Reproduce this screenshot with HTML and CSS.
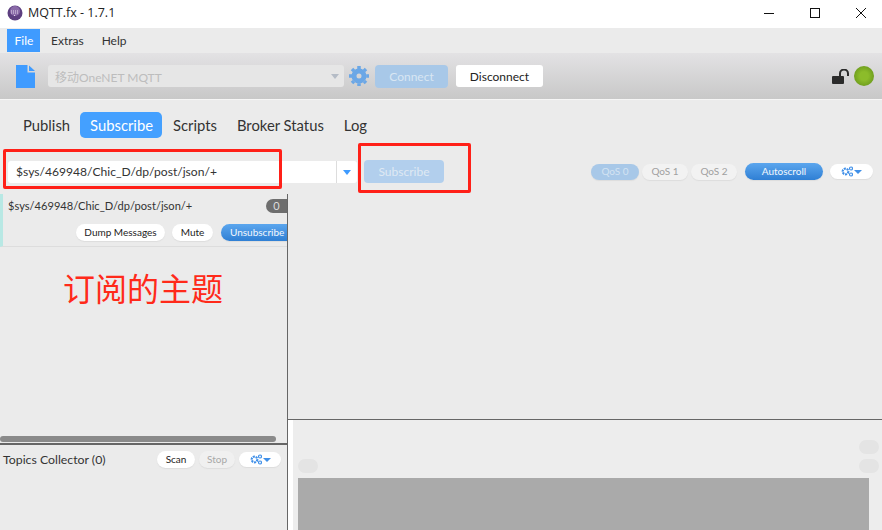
FILE: index.html
```html
<!DOCTYPE html>
<html lang="zh-CN">
<head>
    <meta charset="UTF-8">
    <title>MQTT.fx - 1.7.1</title>
    <link rel="stylesheet" href="styles.css">
</head>
<body>
<div class="window">
    <div class="titlebar">
        <svg class="app-icon" width="16" height="16" viewBox="0 0 16 16"><circle cx="8" cy="8" r="7.500" fill="#5d3f80"/><circle cx="8" cy="6" r="5" fill="#8a6aa8"/><path d="M4 6h8M4 8h8M7 10.500h2" stroke="#e4dcec" stroke-width="1" stroke-dasharray="1 1"/></svg>
        <span class="app-title">MQTT.fx - 1.7.1</span>
        <div class="win-btns">
            <svg width="12" height="12" viewBox="0 0 12 12"><path d="M1 6.500h10" stroke="#111" stroke-width="1"/></svg>
            <svg width="12" height="12" viewBox="0 0 12 12"><rect x="1.500" y="1.500" width="9" height="9" fill="none" stroke="#111"/></svg>
            <svg width="12" height="12" viewBox="0 0 12 12"><path d="M1 1l10 10M11 1L1 11" stroke="#111" stroke-width="1"/></svg>
        </div>
    </div>

    <div class="menubar">
        <div class="menu active">File</div>
        <div class="menu">Extras</div>
        <div class="menu">Help</div>
    </div>

    <div class="toolbar">
        <svg class="file-icon" width="19" height="23" viewBox="0 0 19 23"><path d="M0 0h11.500v7.500H19V23H0z" fill="#3f9bff"/><path d="M13 0.500l6 5.500h-6z" fill="#3f9bff"/></svg>
        <div class="profile">
            <span>移动OneNET MQTT</span>
            <i class="caret grey"></i>
        </div>
        <svg class="gear" width="20" height="20" viewBox="0 0 20 20"><circle cx="10" cy="10" r="5" fill="none" stroke="#6ba7e6" stroke-width="5"/><path d="M10 0v20M0 10h20M3 3l14 14M17 3L3 17" stroke="#6ba7e6" stroke-width="3.500" stroke-dasharray="3 14.200 3"/></svg>
        <button class="btn-connect">Connect</button>
        <button class="btn-disconnect">Disconnect</button>
        <svg class="lock" width="18" height="15" viewBox="0 0 18 15"><rect x="0" y="7" width="12" height="8" rx="1" fill="#2b2b2b"/><path d="M8 7V4.500a4 4 0 0 1 8 0V7" fill="none" stroke="#2b2b2b" stroke-width="2"/></svg>
        <div class="led"></div>
    </div>

    <div class="tabs">
        <div class="tab">Publish</div>
        <div class="tab active">Subscribe</div>
        <div class="tab">Scripts</div>
        <div class="tab">Broker Status</div>
        <div class="tab">Log</div>
    </div>

    <div class="subscribe-row">
        <div class="topic-input">
            <span class="topic-value">$sys/469948/Chic_D/dp/post/json/+</span>
            <span class="topic-arrow"><i class="caret"></i></span>
        </div>
        <button class="btn-subscribe">Subscribe</button>
        <div class="qos-group">
            <button class="pill qos on">QoS 0</button>
            <button class="pill qos">QoS 1</button>
            <button class="pill qos">QoS 2</button>
        </div>
        <button class="pill autoscroll">Autoscroll</button>
        <button class="pill cog-btn">
            <svg width="12" height="11" viewBox="0 0 12 11"><circle cx="4.500" cy="5.500" r="2.800" fill="none" stroke="#3f8fe8" stroke-width="2.200" stroke-dasharray="2 .8"/><circle cx="10" cy="2.500" r="1.500" fill="none" stroke="#3f8fe8" stroke-width="1.200"/><circle cx="10" cy="8.500" r="1.500" fill="none" stroke="#3f8fe8" stroke-width="1.200"/></svg>
            <i class="caret small"></i>
        </button>
    </div>

    <div class="split">
        <div class="left">
            <div class="topic-list">
                <div class="topic-item">
                    <div class="topic-head">
                        <span>$sys/469948/Chic_D/dp/post/json/+</span>
                        <span class="count">0</span>
                    </div>
                    <div class="topic-actions">
                        <button class="pill">Dump Messages</button>
                        <button class="pill">Mute</button>
                        <button class="pill unsub">Unsubscribe</button>
                    </div>
                </div>
                <div class="scrollbar"></div>
            </div>
            <div class="collector">
                <span class="collector-title">Topics Collector (0)</span>
                <button class="pill scan">Scan</button>
                <button class="pill stop">Stop</button>
                <button class="pill cog-btn small">
                    <svg width="12" height="11" viewBox="0 0 12 11"><circle cx="4.500" cy="5.500" r="2.800" fill="none" stroke="#3f8fe8" stroke-width="2.200" stroke-dasharray="2 .8"/><circle cx="10" cy="2.500" r="1.500" fill="none" stroke="#3f8fe8" stroke-width="1.200"/><circle cx="10" cy="8.500" r="1.500" fill="none" stroke="#3f8fe8" stroke-width="1.200"/></svg>
                    <i class="caret small"></i>
                </button>
            </div>
        </div>
        <div class="right">
            <div class="messages"></div>
            <div class="detail">
                <div class="detail-pills">
                    <div class="ghost"></div>
                    <div class="ghost-stack">
                        <div class="ghost"></div>
                        <div class="ghost"></div>
                    </div>
                </div>
                <div class="payload"></div>
            </div>
        </div>
    </div>

    <!-- red marks drawn over the screenshot -->
    <div class="mark mark-topic"></div>
    <div class="mark mark-sub"></div>
    <div class="mark-text">订阅的主题</div>
</div>
</body>
</html>
```

FILE: styles.css
```css
* {
    box-sizing: border-box;
}

html, body {
    margin: 0;
    padding: 0;
}

body {
    font-family: Lato, "Noto Sans CJK SC", sans-serif;
    color: #333;
}

.window {
    position: relative;
    width: 882px;
    height: 530px;
    overflow: hidden;
    background: #ebebeb;
    display: flex;
    flex-direction: column;
}

button {
    font-family: inherit;
    border: none;
    padding: 0;
}

.caret {
    display: inline-block;
    width: 0;
    height: 0;
    border-left: 4.500px solid transparent;
    border-right: 4.500px solid transparent;
    border-top: 5px solid #3f9bff;
}

.caret.grey {
    border-top-color: #b5bcc6;
}

.caret.small {
    border-left-width: 4px;
    border-right-width: 4px;
    border-top-width: 4px;
    border-top-color: #3f8fe8;
}

/* title bar */
.titlebar {
    height: 28px;
    background: #fff;
    display: flex;
    align-items: center;
    padding: 0 0 3px 7px;
    flex: none;
}

.app-title {
    margin-left: 5px;
    font-family: "Open Sans", sans-serif;
    font-size: 12.500px;
    color: #222;
}

.win-btns {
    margin-left: auto;
    display: flex;
    gap: 34px;
    padding-right: 15px;
}

/* menu */
.menubar {
    height: 25px;
    display: flex;
    padding: 1px 0 1px 7px;
    flex: none;
    font-size: 12px;
}

.menu {
    display: flex;
    align-items: center;
    padding: 0 7px 0 11px;
    color: #333;
}

.menu.active {
    background: #3f9bff;
    color: #fff;
    padding: 0 7.500px;
    width: 33px;
}

/* toolbar */
.toolbar {
    height: 47px;
    flex: none;
    display: flex;
    align-items: center;
    background: linear-gradient(#e3e2e4, #c8c8c8);
    border-bottom: 1px solid #f6f6f6;
    padding-left: 16px;
}

.file-icon {
    flex: none;
}

.profile {
    width: 296px;
    height: 22px;
    margin-left: 13px;
    background: #e6e6e6;
    border-radius: 3px;
    display: flex;
    align-items: center;
    justify-content: space-between;
    padding: 0 5px 0 7px;
    font-size: 12px;
    color: #bdbdbd;
}

.gear {
    margin-left: 5px;
    flex: none;
}

.btn-connect {
    width: 73px;
    height: 23px;
    margin-left: 6px;
    background: #a8c8e8;
    border-radius: 4px;
    color: #d8e6f3;
    font-size: 12px;
}

.btn-disconnect {
    width: 87px;
    height: 22px;
    margin-left: 8px;
    background: #fff;
    border-radius: 3px;
    color: #222;
    font-size: 12px;
}

.lock {
    margin-left: auto;
    flex: none;
}

.led {
    width: 20px;
    height: 20px;
    margin: 0 8px 0 4px;
    border-radius: 50%;
    background: radial-gradient(circle, #8cbc2a 30%, #5d8b17 100%);
}

/* tabs */
.tabs {
    height: 60px;
    flex: none;
    display: flex;
    align-items: flex-start;
    gap: 0;
    padding: 12px 0 0 13px;
}

.tab {
    height: 26px;
    line-height: 27px;
    padding: 0 10px;
    font-size: 14.800px;
    color: #333;
    border-radius: 5px;
}

.tab.active {
    width: 82px;
    margin-right: 1px;
    background: #44a0ff;
    color: #fff;
}

/* subscribe row */
.subscribe-row {
    height: 34px;
    flex: none;
    display: flex;
    align-items: flex-start;
    padding-left: 8px;
}

.topic-input {
    width: 349px;
    height: 22px;
    margin-top: 1px;
    background: #fff;
    border-radius: 3px;
    display: flex;
    font-size: 12.100px;
    color: #333;
}

.topic-value {
    flex: 1;
    line-height: 21px;
    padding-left: 8px;
    border-right: 1px solid #ddd;
}

.topic-arrow {
    width: 20px;
    display: flex;
    align-items: center;
    justify-content: center;
}

.btn-subscribe {
    width: 80px;
    height: 23px;
    margin-left: 7px;
    background: #b2cfed;
    border-radius: 4px;
    color: #dfe9f3;
    font-size: 12px;
}

.pill {
    height: 17px;
    border-radius: 9px;
    background: #fff;
    padding-bottom: 2px;
    font-size: 10px;
    color: #222;
    box-shadow: 0 1px 1px #ddd;
    flex: none;
}

.qos-group {
    margin-left: auto;
    margin-top: 4px;
    display: flex;
    gap: 3px;
}

.qos {
    width: 46px;
    height: 16px;
    background: #f2f2f2;
    color: #a0a0a0;
}

.qos.on {
    width: 48px;
    background: #a8c8e8;
    color: #d4e3f2;
}

.autoscroll {
    width: 78px;
    margin: 3px 0 0 8px;
    background: linear-gradient(#5ba6ee, #2f7fd4);
    color: #f2f7fc;
}

.cog-btn {
    width: 43px;
    height: 15px;
    margin: 4px 9px 0 7px;
    padding-bottom: 0;
    display: flex;
    align-items: center;
    justify-content: center;
    gap: 1px;
}

.cog-btn.small {
    width: 42px;
    margin: 1px 0 0 4px;
}

/* split panes */
.split {
    flex: 1;
    min-height: 0;
    display: flex;
}

.left {
    width: 288px;
    flex: none;
    border-right: 1px solid #666;
    display: flex;
    flex-direction: column;
}

.topic-list {
    height: 251px;
    flex: none;
    border-bottom: 2px solid #666;
    display: flex;
    flex-direction: column;
    overflow: hidden;
}

.topic-item {
    height: 53px;
    border-left: 3px solid #b8e8e4;
    border-bottom: 1px solid #ddd;
    overflow: hidden;
}

.topic-head {
    height: 23px;
    display: flex;
    align-items: center;
    justify-content: space-between;
    padding-left: 5px;
    font-size: 11.100px;
    color: #333;
}

.count {
    width: 21px;
    height: 14px;
    border-radius: 7px 0 0 7px;
    background: #6e6e6e;
    color: #ddd;
    font-size: 11px;
    line-height: 14px;
    text-align: center;
}

.topic-actions {
    display: flex;
    gap: 7px;
    margin-top: 7px;
    padding-left: 73px;
}

.topic-actions .pill {
    width: 89px;
}

.topic-actions .pill:nth-child(2) {
    width: 41px;
}

.topic-actions .pill.unsub {
    width: 66px;
    margin-left: 1px;
    background: linear-gradient(#5ba6ee, #2f7fd4);
    color: #f2f7fc;
    text-align: left;
    padding-left: 9px;
    border-radius: 9px 0 0 9px;
}

.scrollbar {
    margin-top: auto;
    margin-bottom: 1px;
    width: 276px;
    height: 6px;
    border-radius: 3px;
    background: #8a8a8a;
}

.collector {
    flex: 1;
    display: flex;
    align-items: flex-start;
    padding: 6px 0 0 3px;
}

.collector-title {
    font-size: 12.300px;
    line-height: 17px;
    color: #333;
    width: 154px;
}

.scan {
    width: 38px;
    height: 17px;
}

.stop {
    width: 36px;
    height: 17px;
    margin-left: 4px;
    background: #f0f0f0;
    color: #a8a8a8;
}

.right {
    flex: 1;
    display: flex;
    flex-direction: column;
    min-width: 0;
}

.messages {
    height: 226px;
    flex: none;
    border-bottom: 1px solid #666;
}

.detail {
    flex: 1;
    border-left: 5px solid #fff;
    padding-left: 5px;
    display: flex;
    flex-direction: column;
    background: #ededed;
}

.detail-pills {
    height: 58px;
    flex: none;
    display: flex;
    justify-content: space-between;
    align-items: flex-end;
    padding: 0 3px 5px 0;
}

.ghost-stack {
    display: flex;
    flex-direction: column;
    gap: 5px;
}

.ghost {
    width: 20px;
    height: 14px;
    border-radius: 7px;
    background: #e4e4e4;
}

.payload {
    flex: 1;
    width: 571px;
    background: #aaa;
}

/* annotations */
.mark {
    position: absolute;
    border: 3px solid #ff2018;
    border-radius: 2px;
}

.mark-topic {
    left: 3px;
    top: 149px;
    width: 279px;
    height: 40px;
}

.mark-sub {
    left: 358px;
    top: 143px;
    width: 113px;
    height: 50px;
}

.mark-text {
    position: absolute;
    left: 63px;
    top: 264px;
    font-family: "Noto Sans CJK SC", sans-serif;
    font-size: 32px;
    line-height: 46px;
    color: #ff2a1a;
}
```
